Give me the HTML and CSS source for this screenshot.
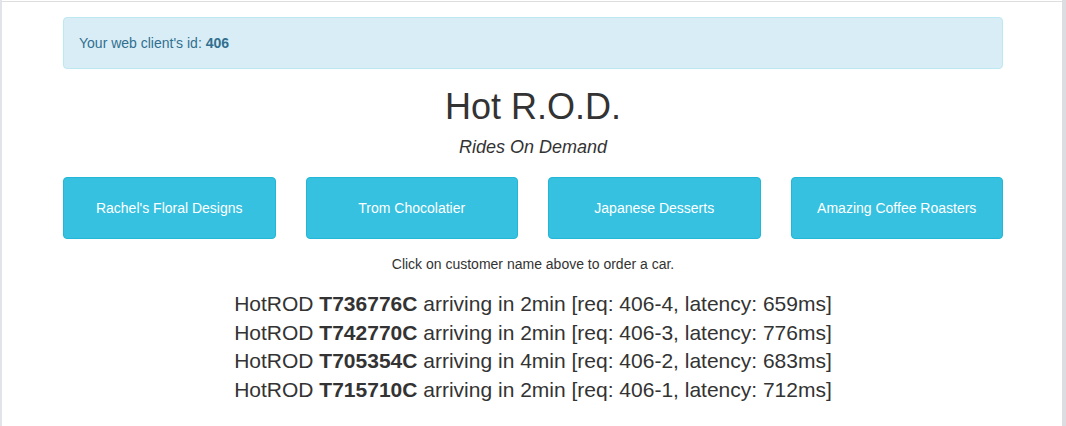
FILE: index.html
```html
<!DOCTYPE html>
<html lang="en">
<head>
<meta charset="utf-8">
<title>Hot R.O.D. - Rides On Demand</title>
<link rel="stylesheet" href="styles.css">
</head>
<body>
<div class="container">
  <div class="alert">Your web client's id: <strong>406</strong></div>
  <h1 class="title">Hot R.O.D.</h1>
  <p class="subtitle">Rides On Demand</p>
  <div class="customers">
    <button class="btn">Rachel's Floral Designs</button>
    <button class="btn">Trom Chocolatier</button>
    <button class="btn">Japanese Desserts</button>
    <button class="btn">Amazing Coffee Roasters</button>
  </div>
  <p class="hint">Click on customer name above to order a car.</p>
  <div class="rides">
    <div class="ride">HotROD <b>T736776C</b> arriving in 2min [req: 406-4, latency: 659ms]</div>
    <div class="ride">HotROD <b>T742770C</b> arriving in 2min [req: 406-3, latency: 776ms]</div>
    <div class="ride">HotROD <b>T705354C</b> arriving in 4min [req: 406-2, latency: 683ms]</div>
    <div class="ride">HotROD <b>T715710C</b> arriving in 2min [req: 406-1, latency: 712ms]</div>
  </div>
</div>
</body>
</html>
```
FILE: styles.css
```css
html {
  background:
    linear-gradient(to left, #dcdce3 4px, transparent 4px),
    linear-gradient(to right, #e2e2ea 2px, transparent 2px),
    linear-gradient(to bottom, transparent 1px, #dedede 1px, #dedede 2px, transparent 2px),
    #ffffff;
  background-repeat: no-repeat;
  min-height: 100%;
}
body {
  margin: 0;
  font-family: "Liberation Sans", Arial, Helvetica, sans-serif;
  font-size: 14px;
  line-height: 20px;
  color: #333333;
}
.container {
  width: 940px;
  margin: 0 auto;
  padding-top: 17px;
}
.alert {
  padding: 15px;
  border: 1px solid #bce8f1;
  border-radius: 4px;
  background: #d9edf7;
  color: #31708f;
}
.alert strong { font-weight: bold; }
.title {
  margin: 18px 0 0;
  font-size: 36px;
  line-height: 40px;
  font-weight: 500;
  text-align: center;
  color: #333;
}
.subtitle {
  margin: 8px 0 0;
  font-size: 18px;
  line-height: 24px;
  font-style: italic;
  text-align: center;
}
.customers {
  margin-top: 18px;
  display: grid;
  grid-template-columns: repeat(4, 1fr);
  gap: 30px;
}
.btn {
  height: 62px;
  border: 1px solid #22b6d7;
  border-radius: 4px;
  background: #35c1df;
  color: #ffffff;
  font-family: inherit;
  font-size: 14px;
  line-height: 20px;
  padding: 0 10px;
  cursor: pointer;
}
.hint {
  margin: 15px 0 0;
  text-align: center;
}
.rides {
  margin-top: 16px;
  text-align: center;
  font-size: 21px;
  line-height: 28.6px;
}
.ride b { font-weight: bold; }
```
